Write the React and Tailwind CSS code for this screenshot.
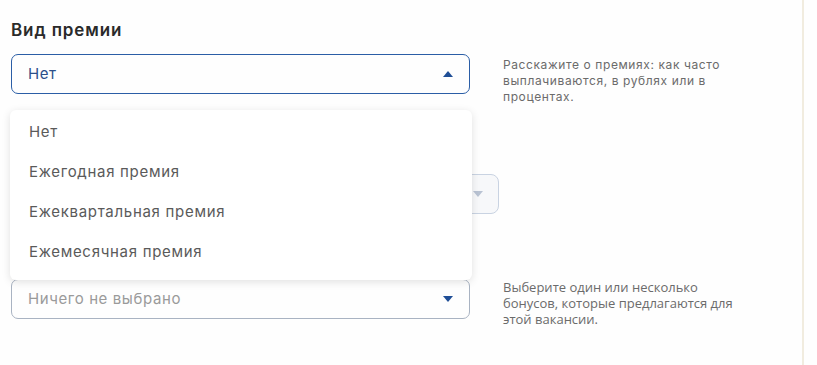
import React from "react";

const Caret = ({ up, className }) => (
  <svg width="10" height="6" viewBox="0 0 10 6" className={className}>
    {up ? <path d="M0 6 L5 0 L10 6 Z" fill="currentColor" /> : <path d="M0 0 L10 0 L5 6 Z" fill="currentColor" />}
  </svg>
);

export default function App() {
  const items = ["Нет", "Ежегодная премия", "Ежеквартальная премия", "Ежемесячная премия"];
  return (
    <div className="w-[817px] h-[365px] bg-[#fefefe] overflow-hidden" style={{ fontFamily: "Inter, 'Noto Sans', sans-serif" }}>
      <div className="relative w-[804px] h-[365px] border-r-2 border-[#f1ecdf] pl-[11px] pt-[18px]">
        <h2 className="text-[17px] leading-[24px] font-semibold text-[#2a2a2a] tracking-[0.9px]">Вид премии</h2>

        <div className="mt-[12px] flex items-start gap-[33px] h-[40px]">
          <div className="w-[459px] h-[40px] shrink-0 rounded-[7px] border border-[#2b5ea6] flex items-center justify-between pl-[16px] pr-[16px]">
            <span className="text-[15px] text-[#2c4f8a] tracking-[0.5px]">Нет</span>
            <Caret up className="text-[#1f4e96]" />
          </div>
          <p className="w-[240px] pt-[3px] text-[12px] leading-[16px] text-[#6b6b6b] tracking-[0.6px]">
            Расскажите о премиях: как часто выплачиваются, в рублях или в процентах.
          </p>
        </div>

        <div className="mt-[80px] flex">
          <div className="ml-[280px] w-[208px] h-[40px] rounded-[8px] border border-[#c9d3e2] bg-[#f7f8fa] flex items-center justify-end pr-[15px]">
            <Caret className="text-[#b9c3d3]" />
          </div>
        </div>

        <div className="mt-[65px] flex items-start gap-[33px]">
          <div className="w-[459px] h-[40px] shrink-0 rounded-[7px] border border-[#a9b3c2] flex items-center justify-between pl-[16px] pr-[16px]">
            <span className="text-[15px] text-[#9a9a9a] tracking-[0.6px]">Ничего не выбрано</span>
            <Caret className="text-[#1f4e96]" />
          </div>
          <p className="w-[246px] pt-[0px] text-[13px] leading-[16px] text-[#6b6b6b]" style={{ fontFamily: "'Open Sans', sans-serif" }}>
            Выберите один или несколько бонусов, которые предлагаются для этой вакансии.
          </p>
        </div>

        <div className="absolute left-[10px] top-[110px] w-[462px] h-[170px] bg-white rounded-[6px] shadow-[0_2px_8px_rgba(0,0,0,0.12)] pt-[2px] flex flex-col">
          {items.map((t) => (
            <div key={t} className="h-[40px] flex items-center pl-[19px] text-[15px] text-[#5a5a5a] tracking-[0.7px]">{t}</div>
          ))}
        </div>
      </div>
    </div>
  );
}
